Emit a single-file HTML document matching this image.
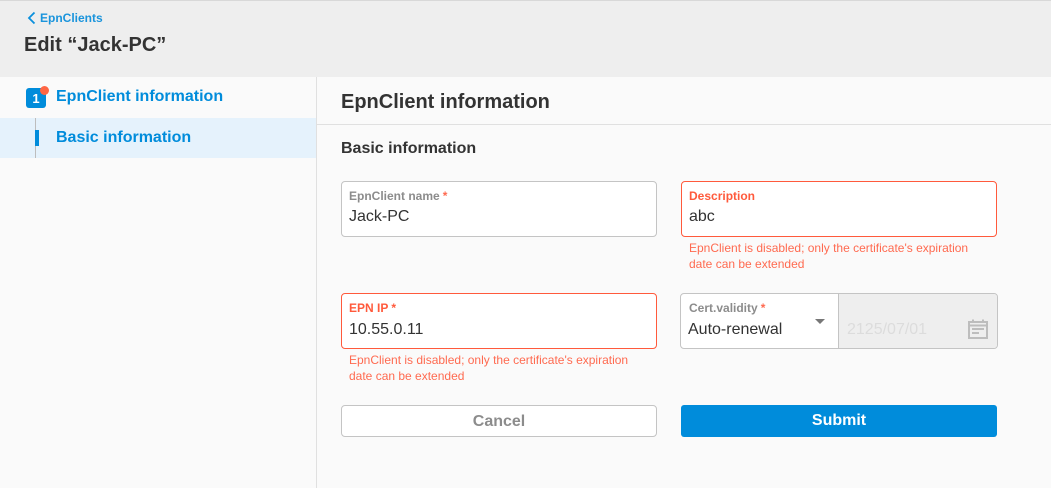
<!DOCTYPE html>
<html><head><meta charset="utf-8"><style>
html,body{margin:0;padding:0}
body{width:1051px;height:488px;position:relative;overflow:hidden;background:#fafafa;font-family:"Liberation Sans",sans-serif;color:#333}
div,span.a{position:absolute;box-sizing:border-box;white-space:nowrap}
svg{position:absolute}
.t{line-height:20px;height:20px}
.box{background:#fff;border:1px solid #c4c4c4;border-radius:4px}
.err{border-color:#ff5a3c}
.lab{font-size:12px;font-weight:bold;color:#8c8c8c}
.lab i{font-style:normal;color:#ff6a50;margin-left:3px}
.val{font-size:16px;color:#333}
.msg{font-size:12px;color:#ff6a50;line-height:16px}
.red{color:#ff5a3c}
</style></head><body>
<div style="left:0;top:0;width:1051px;height:77px;background:#eee;border-top:1px solid #d8d8d8"></div>
<svg style="left:27px;top:11px" width="10" height="14" viewBox="0 0 10 14"><path d="M7.5 1.5 L2 7 L7.5 12.5" fill="none" stroke="#0a8fdc" stroke-width="1.8"/></svg>
<div class="t" style="left:40px;top:8px;font-size:12px;font-weight:bold;color:#1a94dc">EpnClients</div>
<div class="t" style="left:24px;top:33px;font-size:20px;font-weight:bold;color:#333;line-height:24px;height:24px">Edit “Jack-PC”</div>

<div style="left:316px;top:77px;width:1px;height:411px;background:#e0e0e0"></div>
<div style="left:0;top:118px;width:316px;height:40px;background:#e5f2fc"></div>
<div style="left:35px;top:118px;width:1px;height:40px;background:#bdbdbd"></div>
<div style="left:35px;top:130px;width:4px;height:16px;background:#008cdb"></div>
<div style="left:26px;top:88px;width:20px;height:20px;background:#008cdb;border-radius:3px;color:#fff;font-size:13px;font-weight:bold;text-align:center;line-height:21px">1</div>
<div style="left:40px;top:86px;width:9px;height:9px;background:#ff6644;border-radius:50%"></div>
<div class="t" style="left:56px;top:87px;font-size:16px;font-weight:bold;color:#008cdb">EpnClient information</div>
<div class="t" style="left:56px;top:128px;font-size:16px;font-weight:bold;color:#008cdb">Basic information</div>

<div style="left:317px;top:124px;width:734px;height:1px;background:#e0e0e0"></div>
<div class="t" style="left:341px;top:91px;font-size:20px;font-weight:bold;color:#333;line-height:22px;height:22px">EpnClient information</div>
<div class="t" style="left:341px;top:139px;font-size:16px;font-weight:bold;color:#333">Basic information</div>

<div class="box" style="left:341px;top:181px;width:316px;height:56px"></div>
<div class="t lab" style="left:349px;top:186px">EpnClient name<i>*</i></div>
<div class="t val" style="left:349px;top:207px">Jack-PC</div>

<div class="box err" style="left:681px;top:181px;width:316px;height:56px"></div>
<div class="t lab red" style="left:689px;top:186px">Description</div>
<div class="t val" style="left:689px;top:207px">abc</div>
<div class="msg" style="left:689px;top:240px">EpnClient is disabled; only the certificate's expiration<br>date can be extended</div>

<div class="box err" style="left:341px;top:293px;width:316px;height:56px"></div>
<div class="t lab red" style="left:349px;top:298px">EPN IP<i style="color:#ff5a3c">*</i></div>
<div class="t val" style="left:349px;top:320px">10.55.0.11</div>
<div class="msg" style="left:349px;top:352px">EpnClient is disabled; only the certificate's expiration<br>date can be extended</div>

<div class="box" style="left:680px;top:293px;width:318px;height:56px"></div>
<div style="left:838px;top:294px;width:159px;height:54px;background:#eee;border-left:1px solid #c4c4c4;border-radius:0 3px 3px 0"></div>
<div class="t lab" style="left:689px;top:298px">Cert.validity<i>*</i></div>
<div class="t val" style="left:688px;top:320px">Auto-renewal</div>
<svg style="left:815px;top:319px" width="10" height="6" viewBox="0 0 10 6"><path d="M0 0H10L5 5Z" fill="#777"/></svg>
<div class="t val" style="left:847px;top:320px;color:#dcdcdc">2125/07/01</div>
<svg style="left:968px;top:319px" width="20" height="20" viewBox="0 0 20 20"><path d="M5 .5V4M15 .5V4" stroke="#bdbdbd" stroke-width="2" fill="none"/><rect x="1" y="3" width="18" height="16" fill="none" stroke="#bdbdbd" stroke-width="2"/><path d="M1 6.5H19" stroke="#bdbdbd" stroke-width="2"/><path d="M4 10H16M4 14H11" stroke="#bdbdbd" stroke-width="2"/></svg>

<div class="box" style="left:341px;top:405px;width:316px;height:32px;color:#8c8c8c;font-size:16px;font-weight:bold;text-align:center;line-height:31px">Cancel</div>
<div style="left:681px;top:405px;width:316px;height:32px;background:#008cdb;border-radius:3px;color:#fff;font-size:16px;font-weight:bold;text-align:center;line-height:32px">Submit</div>
</body></html>
